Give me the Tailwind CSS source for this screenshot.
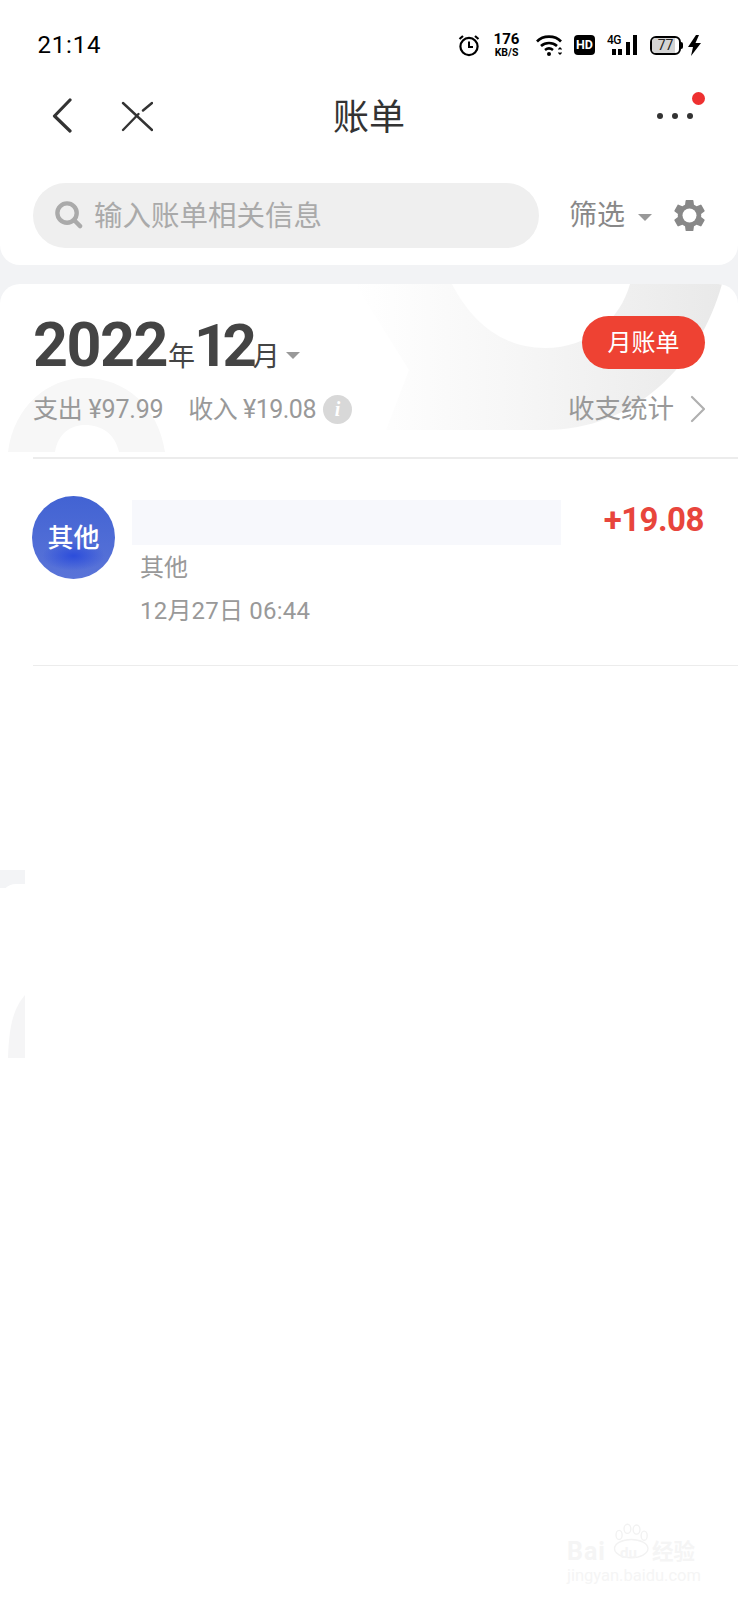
<!DOCTYPE html>
<html lang="zh">
<head>
<meta charset="utf-8">
<script src="https://cdn.jsdelivr.net/npm/@tailwindcss/browser@4"></script>
</head>
<body class="m-0">
<div class="relative w-[738px] h-[1600px] overflow-hidden bg-[#f2f3f5] font-['Roboto','Noto_Sans_CJK_SC',sans-serif]">

  <!-- top card -->
  <div class="h-[265px] bg-white rounded-b-[20px]">
    <div class="h-[90px] pl-[37.500px] pr-[37px] flex items-center justify-between text-black">
      <span class="text-[24px] tracking-[0.8px] leading-none">21:14</span>
      <div class="flex items-center">
        <svg class="w-[22px] h-[24px]" viewBox="0 0 22 24" fill="none" stroke="#000"><circle cx="11" cy="13.5" r="8.6" stroke-width="2.2"/><path d="M11 8.5v5.5h4" stroke-width="2"/><path d="M1.5 6 5 3M20.5 6 17 3" stroke-width="2.2"/></svg>
        <div class="ml-[13px] w-[27px] flex flex-col items-center font-bold leading-none">
          <span class="text-[15px] leading-[13px]">176</span>
          <span class="text-[10.5px] leading-[11px] mt-[1px]">KB/S</span>
        </div>
        <svg class="ml-[16px] w-[27px] h-[22px]" viewBox="0 0 27 22" fill="none" stroke="#000" stroke-width="2.6"><path d="M1 7.5C7 1 19 1 25 7.5"/><path d="M5 12c4.500-4 11.500-4 16 0"/><path d="M9 16c2.500-2 5.500-2 8 0"/><circle cx="13" cy="20" r="2" fill="#000" stroke="none"/><path d="M22.500 15.500l1.500-1.500 1.500 1.500M22.500 18.500l1.500 1.500 1.500-1.500" stroke-width="1.300"/></svg>
        <div class="ml-[11px] w-[21px] h-[20px] rounded-[4px] bg-black text-white flex items-center justify-center text-[12.5px] font-bold leading-none">HD</div>
        <div class="ml-[12px] w-[30px] h-[20px] relative">
          <span class="absolute left-0 -top-[1px] text-[12px] font-medium leading-[12px] tracking-[-0.5px]">4G</span>
          <span class="absolute left-[5px] bottom-0 w-[4px] h-[6px] bg-black"></span>
          <span class="absolute left-[11px] bottom-0 w-[4px] h-[6px] bg-black"></span>
          <span class="absolute left-[19px] bottom-0 w-[4px] h-[13px] bg-black"></span>
          <span class="absolute left-[26px] bottom-0 w-[4px] h-[20px] bg-black"></span>
        </div>
        <div class="ml-[13px] w-[33px] h-[19px] relative">
          <div class="absolute left-0 top-0 w-[31px] h-[19px] rounded-[6px] border-2 border-black overflow-hidden">
            <div class="w-[23px] h-full bg-[#d4d4d4]"></div>
          </div>
          <div class="absolute right-0 top-[6px] w-[2px] h-[7px] bg-black rounded-r-[2px]"></div>
          <span class="absolute left-0 w-[31px] top-0 text-center text-[14px] leading-[19px] text-[#222]">77</span>
        </div>
        <svg class="ml-[5px] w-[13px] h-[21px]" viewBox="0 0 13 21"><path d="M8 0 0 12h5l-2 9 10-13H7.500L11 0z" fill="#000"/></svg>
      </div>
    </div>

    <div class="relative h-[52px] flex items-center justify-between">
      <div class="flex items-center">
        <svg class="ml-[50px] w-[24px] h-[36px]" viewBox="0 0 24 36" fill="none" stroke="#333" stroke-width="3.200" stroke-linecap="round" stroke-linejoin="round"><path d="M20 2 4.500 18 20 33"/></svg>
        <svg class="ml-[47px] w-[32px] h-[32px]" viewBox="0 0 32 32" fill="none" stroke="#333" stroke-width="2.400" stroke-linecap="round"><path d="M2 3l29 27"/><path d="M31 3 22 10.500"/><path d="M17.500 14 2 30"/></svg>
      </div>
      <span class="absolute left-0 right-0 top-[2px] text-center text-[36px] leading-[52px] text-[#333]">账单</span>
      <div class="relative mr-[45px] flex items-center gap-[9px]">
        <span class="w-[6px] h-[6px] rounded-full bg-[#333]"></span>
        <span class="w-[6px] h-[6px] rounded-full bg-[#333]"></span>
        <span class="w-[6px] h-[6px] rounded-full bg-[#333]"></span>
        <span class="absolute -right-[12px] -top-[21px] w-[13px] h-[13px] rounded-full bg-[#ee3030]"></span>
      </div>
    </div>

    <div class="mt-[41px] flex items-center pl-[33px]">
      <div class="w-[506px] h-[65px] rounded-full bg-[#efefef] flex items-center">
        <svg class="ml-[21px] -mt-[2px] w-[29px] h-[29px]" viewBox="0 0 30 30" fill="none" stroke="#aaa" stroke-width="4.500"><circle cx="13.500" cy="13.500" r="10"/><path d="M21 21l6 6" stroke-linecap="round"/></svg>
        <span class="ml-[11px] mt-[3px] text-[28.500px] leading-none text-[#aaaaaa]">输入账单相关信息</span>
      </div>
      <span class="ml-[30px] text-[28px] leading-none text-[#888]">筛选</span>
      <span class="ml-[13px] mt-[3px] w-0 h-0 border-x-[7px] border-x-transparent border-t-[7px] border-t-[#999]"></span>
      <svg class="ml-[18px] -mt-[1px] w-[39px] h-[39px]" viewBox="0 0 24 24" fill="#888"><path d="M19.140 12.940c.04-.3.06-.61.06-.94 0-.32-.02-.64-.07-.94l2.030-1.580a.49.49 0 0 0 .12-.61l-1.920-3.320a.488.488 0 0 0-.59-.22l-2.390.96c-.5-.38-1.030-.7-1.620-.94l-.36-2.540a.484.484 0 0 0-.48-.41h-3.840c-.24 0-.43.17-.47.41l-.36 2.540c-.59.24-1.130.57-1.620.94l-2.390-.96c-.22-.08-.47 0-.59.22L2.740 8.870c-.12.21-.08.47.12.61l2.030 1.580c-.05.3-.09.63-.09.94s.02.64.07.94l-2.030 1.580a.49.49 0 0 0-.12.61l1.920 3.320c.12.22.37.29.59.22l2.390-.96c.5.38 1.030.7 1.620.94l.36 2.540c.05.24.24.41.48.41h3.840c.24 0 .44-.17.47-.41l.36-2.540c.59-.24 1.130-.56 1.620-.94l2.390.96c.22.08.47 0 .59-.22l1.920-3.320c.12-.22.07-.47-.12-.61l-2.010-1.580z"/><circle cx="12" cy="12" r="4.300" fill="#fff"/></svg>
    </div>
  </div>

  <!-- bill card -->
  <div class="absolute left-0 right-0 top-[284px] bottom-0 bg-white rounded-t-[20px] overflow-hidden">
    <!-- faint background artwork -->
    <svg class="absolute left-0 top-0" width="738" height="180" viewBox="0 0 738 180">
      <defs>
        <linearGradient id="g" x1="0" y1="0" x2="1" y2="0">
          <stop offset="0" stop-color="#ffffff"/>
          <stop offset="0.45" stop-color="#f6f6f6"/>
          <stop offset="1" stop-color="#e9e9e9"/>
        </linearGradient>
      </defs>
      <path d="M355 0 L409 86 L386 146 H545 C635 146 700 80 722 0 H630 C620 35 590 64 545 64 C500 64 470 35 452 0 Z" fill="url(#g)"/>
      <path d="M8 168 C14 122 48 94 85 94 C125 94 158 122 165 168 H119 C115 150 102 141 85 141 C70 141 58 150 55 168 Z" fill="#f7f7f7"/>
    </svg>
    <div class="relative">
      <div class="relative flex items-start justify-between px-[33px] pt-[32px]">
        <div class="flex items-baseline text-[#444] -mt-[4px]">
          <span class="text-[61px] leading-[66px] font-bold tracking-[-1.500px]">2022</span>
          <span class="ml-[1px] text-[27px] leading-none">年</span>
          <span class="-ml-[1px] text-[60px] leading-[66px] font-bold tracking-[-6px]">12</span>
          <span class="ml-[2px] text-[27px] leading-none">月</span>
          <span class="ml-[6px] -translate-y-[7px] w-0 h-0 border-x-[7px] border-x-transparent border-t-[7px] border-t-[#999]"></span>
        </div>
        <div class="w-[123px] h-[53px] rounded-full bg-[#ee4233] text-white text-[24px] flex items-center justify-center">月账单</div>
      </div>
      <div class="relative flex items-center justify-between pl-[33px] pr-[33px] mt-[6px] h-[48px] text-[25px] text-[#999]">
        <div class="flex items-center leading-none">
          <span class="tracking-[-0.2px]">支出 ¥97.99</span>
          <span class="ml-[25px] tracking-[-0.5px]">收入 ¥19.08</span>
          <span class="ml-[7px] w-[29px] h-[29px] rounded-full bg-[#d8d8d8] text-white text-[20px] italic font-bold font-['Liberation_Serif',serif] flex items-center justify-center">i</span>
        </div>
        <div class="flex items-center leading-none">
          <span class="text-[26.500px] text-[#999]">收支统计</span>
          <svg class="ml-[16px] w-[15px] h-[28px]" viewBox="0 0 15 28" fill="none" stroke="#b0b0b0" stroke-width="2.200" stroke-linecap="round" stroke-linejoin="round"><path d="M2 2l12 12L2 26"/></svg>
        </div>
      </div>
      <div class="ml-[33px] mt-[24px] h-[1.500px] bg-[#ececec]"></div>

      <div class="flex items-start pl-[32px] pr-[34px] pt-[37px] h-[206px]">
        <div class="w-[83px] h-[83px] shrink-0 rounded-full bg-[radial-gradient(ellipse_38%_18%_at_50%_72%,#2c4ddb,transparent),linear-gradient(#4263d3,#5a74d8)] text-white text-[26px] font-medium flex items-center justify-center pt-[2px]">其他</div>
        <div class="ml-[17px] w-[429px] shrink-0">
          <div class="h-[45px] mt-[4px] bg-[#f7f8fc]"></div>
          <div class="ml-[8px] mt-[8px] text-[24px] leading-[30px] text-[#999]">其他</div>
          <div class="ml-[8px] mt-[13px] text-[24px] leading-[30px] text-[#999] tracking-[0.2px]">12月27日 06:44</div>
        </div>
        <div class="flex-1 text-right mt-[2px] text-[33px] leading-[44px] font-bold text-[#e8453c] tracking-[-0.5px] whitespace-nowrap">+19.08</div>
      </div>
      <div class="ml-[33px] h-[1.500px] bg-[#ececec]"></div>
    </div>

    <!-- faint repeat of the background at the lower left -->
    <div class="absolute left-0 top-[586px] w-[25px] h-[18px] bg-[#f3f4f6]"></div>
    <div class="absolute left-0 top-[600px] w-[25px] h-[20px] bg-white rounded-tl-[16px]"></div>
    <svg class="absolute left-0 top-[700px]" width="25" height="80" viewBox="0 0 25 80"><path d="M25 11 C14 24 9 40 8 74 H25 Z" fill="#f5f5f6"/></svg>

    <!-- baidu watermark -->
    <div class="absolute left-[560px] top-[1226px] w-[170px] h-[74px] text-[#f5f5f5]">
      <span class="absolute left-[7px] top-[29px] text-[25px] font-bold leading-none tracking-[1px]">Bai</span>
      <svg class="absolute left-[53px] top-[10px]" width="38" height="42" viewBox="0 0 50 46" fill="none" stroke="#f2f2f2" stroke-width="1.800"><ellipse cx="8" cy="15" rx="4" ry="6"/><ellipse cx="19" cy="7" rx="4.500" ry="6"/><ellipse cx="31" cy="8" rx="4.500" ry="6"/><ellipse cx="41" cy="16" rx="4" ry="6"/><ellipse cx="24" cy="33" rx="22" ry="12"/></svg>
      <span class="absolute left-[60px] top-[36px] text-[15px] font-bold leading-none">du</span>
      <span class="absolute left-[92px] top-[31px] text-[21.500px] font-bold leading-none">经验</span>
      <span class="absolute left-[7px] top-[58px] text-[16.500px] leading-none whitespace-nowrap">jingyan.baidu.com</span>
    </div>
  </div>
</div>
</body>
</html>
